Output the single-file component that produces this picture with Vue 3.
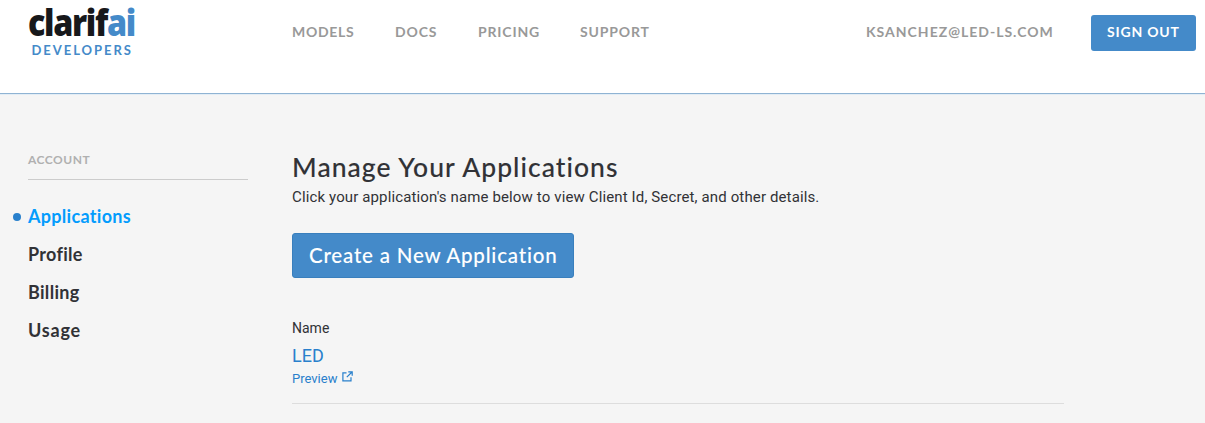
<script setup>
const nav = [
  { label: 'Models', cls: 'models' },
  { label: 'Docs', cls: 'docs' },
  { label: 'Pricing', cls: 'pricing' },
  { label: 'Support', cls: 'support' },
]
const account = [
  { label: 'Applications', cls: 'applications', active: true },
  { label: 'Profile', cls: 'profile' },
  { label: 'Billing', cls: 'billing' },
  { label: 'Usage', cls: 'usage' },
]
</script>

<template>
  <div class="page">
    <header class="header">
      <a class="brand">
        <svg width="112" height="60" viewBox="0 0 112 60" aria-label="clarifai developers">
          <text class="word" x="0" y="36" textLength="107" lengthAdjust="spacingAndGlyphs">clarif<tspan class="blue">ai</tspan></text>
          <text class="sub" x="3.500" y="54.500" textLength="99.500">DEVELOPERS</text>
        </svg>
      </a>
      <nav class="nav">
        <a v-for="n in nav" :key="n.label" :class="n.cls">{{ n.label }}</a>
      </nav>
      <span class="email">ksanchez@led-ls.com</span>
      <a class="signout">Sign out</a>
    </header>
    <div class="body">
      <aside class="side">
        <h2>Account</h2>
        <ul>
          <li v-for="a in account" :key="a.label" :class="[a.cls, { active: a.active }]"><span>{{ a.label }}</span></li>
        </ul>
      </aside>
      <main class="main">
        <h1>Manage Your Applications</h1>
        <p class="intro">Click your application's name below to view Client Id, Secret, and other details.</p>
        <button class="create"><span>Create a New Application</span></button>
        <div class="app">
          <div class="label">Name</div>
          <a class="name">LED</a>
          <a class="preview">
            <span>Preview</span>
            <svg width="11" height="11" viewBox="0 0 11 11" fill="none" stroke="currentColor" stroke-width="1.2">
              <path d="M4.500 1.800H.9V9.800H9V6.300M6.300 .8H10.200V4.700M10 1L4.800 6.200" />
            </svg>
          </a>
        </div>
      </main>
    </div>
  </div>
</template>

<style>
body { margin: 0; background: #f5f5f5; }
</style>

<style scoped>
.page {
  width: 1205px;
  height: 423px;
  overflow: hidden;
  background: #f5f5f5;
  color: #313236;
  font-family: Lato, "Open Sans", sans-serif;
}
.header {
  box-sizing: border-box;
  height: 95px;
  display: flex;
  align-items: flex-start;
  background: #fff;
  border-bottom: 1px solid #e3edf5;
  box-shadow: inset 0 -1px #8fb3d3;
  padding: 0 9px 0 28px;
}
.brand { width: 264px; height: 60px; }
.brand svg { display: block; overflow: visible; }
.word {
  font: 800 37px "Open Sans", sans-serif;
  letter-spacing: -1.5px;
  fill: #17181b;
}
.blue { fill: #448ac9; }
.sub { font: 700 13px Lato, sans-serif; fill: #448ac9; }
.nav { display: flex; flex: 1; }
.nav a, .email, .signout {
  font-size: 14px;
  line-height: 18px;
  font-weight: 700;
  text-transform: uppercase;
  white-space: nowrap;
}
.nav a, .email { color: #999; padding-top: 23px; }
.nav a { letter-spacing: 0.85px; }
.nav .models { width: 103px; letter-spacing: 0.7px; }
.nav .docs { width: 83px; }
.nav .pricing { width: 102px; }
.email { width: 225px; letter-spacing: 1px; }
.signout {
  box-sizing: border-box;
  width: 105px;
  height: 36px;
  margin-top: 15px;
  padding: 8px 0 0 16px;
  border-radius: 3px;
  color: #fff;
  background: #448ac9;
  letter-spacing: 0.8px;
}
.body { display: flex; padding-left: 28px; }
.side { width: 220px; margin-right: 44px; }
.side h2 {
  box-sizing: border-box;
  height: 85px;
  margin: 0;
  padding-top: 57px;
  border-bottom: 1px solid #ccc;
  font-size: 12px;
  line-height: 16px;
  letter-spacing: 0.5px;
  color: #b0b0b0;
  text-transform: uppercase;
}
.side ul { list-style: none; margin: 17px 0 0; padding: 0; }
.side li {
  height: 38px;
  line-height: 38px;
  font-size: 18px;
  font-weight: 700;
  letter-spacing: 0.3px;
  position: relative;
}
.side .usage { letter-spacing: 0.8px; }
.side li.active { color: #039cfd; }
.side li.active::before {
  content: "";
  position: absolute;
  left: -15px;
  top: 16px;
  width: 8px;
  height: 8px;
  border-radius: 50%;
  background: #2980cc;
}
.main { width: 772px; }
h1 {
  margin: 55px 0 0;
  font-size: 26.500px;
  line-height: 34px;
  font-weight: 500;
  letter-spacing: 1.05px;
  -webkit-text-stroke: 0.1px currentColor;
  white-space: nowrap;
}
.intro {
  margin: 3px 0 0;
  font: 15px/20px Roboto, sans-serif;
  letter-spacing: 0.13px;
  white-space: nowrap;
}
.create {
  display: block;
  box-sizing: border-box;
  width: 282px;
  height: 45px;
  margin: 26px 0 0;
  padding: 0 0 2px 16px;
  text-align: left;
  border: 1px solid #397fbd;
  border-radius: 3px;
  background: #448ac9;
  color: #fff;
  font: 500 20.500px Lato, sans-serif;
  letter-spacing: 0.8px;
  -webkit-text-stroke: 0.1px currentColor;
  white-space: nowrap;
}
.app {
  box-sizing: border-box;
  height: 86px;
  margin-top: 40px;
  border-bottom: 1px solid #ddd;
  font-family: Roboto, sans-serif;
}
.label { font-size: 14px; line-height: 20px; }
.name { display: block; margin-top: 6px; font-size: 18px; line-height: 24px; color: #2980cc; }
.preview { display: flex; margin-top: 2px; gap: 5px; font-size: 13px; line-height: 18px; color: #2980cc; }
.preview svg { margin-top: 1px; }
</style>
